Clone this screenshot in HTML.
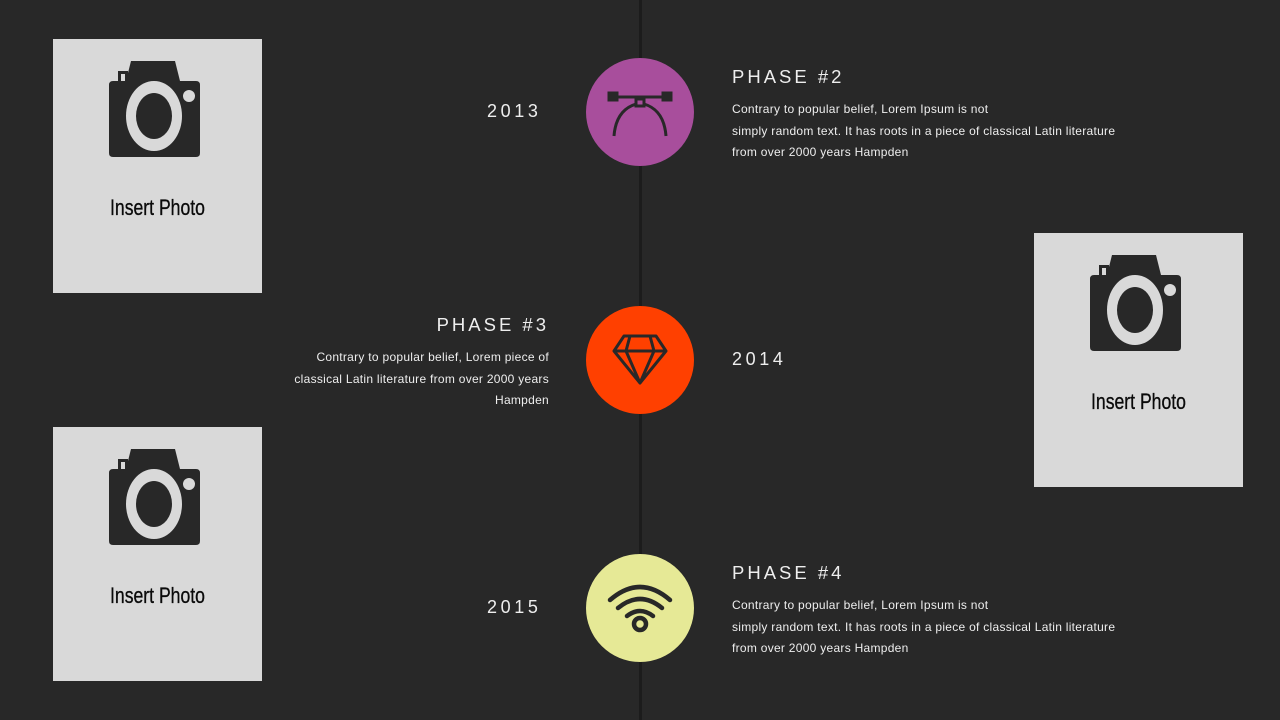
<!DOCTYPE html>
<html><head><meta charset="utf-8"><style>
body{margin:0;width:1280px;height:720px;background:#282828;position:relative;overflow:hidden;font-family:"Liberation Sans",sans-serif;color:#eee}
.line{position:absolute;left:639px;top:0;width:3px;height:720px;background:#1c1c1c}
.ph{position:absolute;width:209px;height:254px;background:#d9d9d9}
.ph svg{position:absolute;left:0;top:0}
.ph span{position:absolute;left:0;width:209px;top:156px;text-align:center;font-size:22px;color:#0a0a0a;transform:scaleX(.8);font-family:"Liberation Sans Narrow","Liberation Sans",sans-serif;-webkit-text-stroke:.3px #0a0a0a}
.c{position:absolute;width:108px;height:108px;border-radius:50%}
.c svg{position:absolute;left:0;top:0}
.t{position:absolute;font-size:18.5px;letter-spacing:3px;color:#eee}
.y{position:absolute;font-size:18px;letter-spacing:3.6px;color:#eee}
.p{position:absolute;font-size:12px;letter-spacing:.28px;line-height:21.5px;color:#eee}
</style></head><body>
<svg width="0" height="0" style="position:absolute"><defs><g id="cam">
<path d="M73 42 L78 22 L122 22 L127 42 L143 42 Q147 42 147 46 L147 114 Q147 118 143 118 L60 118 Q56 118 56 114 L56 46 Q56 42 60 42 Z" fill="#282828"/>
<rect x="65" y="32" width="10" height="11" fill="#282828"/><rect x="68" y="35" width="4" height="7" fill="#d9d9d9"/>
<ellipse cx="101" cy="77" rx="28" ry="35" fill="#d9d9d9"/><ellipse cx="101" cy="77" rx="18" ry="23" fill="#282828"/>
<circle cx="136" cy="57" r="6" fill="#d9d9d9"/></g></defs></svg>
<div class="line"></div>
<div class="ph" style="left:53px;top:39px"><svg width="209" height="254"><use href="#cam"/></svg><span>Insert Photo</span></div>
<div class="ph" style="left:53px;top:427px"><svg width="209" height="254"><use href="#cam"/></svg><span>Insert Photo</span></div>
<div class="ph" style="left:1034px;top:233px"><svg width="209" height="254"><use href="#cam"/></svg><span>Insert Photo</span></div>

<div class="c" style="left:586px;top:58px;background:#a84e9c"><svg width="108" height="108" fill="none" stroke="#282828" stroke-width="3">
<line x1="28" y1="39" x2="80" y2="39"/><rect x="23" y="35" width="8" height="7" fill="#282828"/><rect x="77" y="35" width="8" height="7" fill="#282828"/><rect x="50" y="41" width="8" height="7"/>
<path d="M50 46 Q30 52 28 78 M58 46 Q78 52 80 78"/></svg></div>
<div class="c" style="left:586px;top:306px;background:#ff4000"><svg width="108" height="108" fill="none" stroke="#282828" stroke-width="3" stroke-linejoin="round">
<path d="M38 30 L70 30 L80 45 L54 77 L28 45 Z M28 45 L80 45 M44 30 L40 45 L54 77 L68 45 L64 30"/></svg></div>
<div class="c" style="left:586px;top:554px;background:#e6e996"><svg width="108" height="108" fill="none" stroke="#282828" stroke-width="4.5" stroke-linecap="round">
<path d="M24 46 Q54 20 84 46 M32 54 Q54 36 76 54 M41 62 Q54 52 67 62"/><circle cx="54" cy="70" r="6"/></svg></div>

<div class="y" style="left:487px;top:101px">2013</div>
<div class="t" style="left:732px;top:66px">PHASE #2</div>
<div class="p" style="left:732px;top:99px">Contrary to popular belief, Lorem Ipsum is not<br>simply random text. It has roots in a piece of classical Latin literature<br>from over 2000 years Hampden</div>

<div class="t" style="right:731px;top:314px">PHASE #3</div>
<div class="p" style="right:731px;top:347px;text-align:right">Contrary to popular belief, Lorem piece of<br>classical Latin literature from over 2000 years<br>Hampden</div>
<div class="y" style="left:732px;top:349px">2014</div>

<div class="y" style="left:487px;top:597px">2015</div>
<div class="t" style="left:732px;top:562px">PHASE #4</div>
<div class="p" style="left:732px;top:595px">Contrary to popular belief, Lorem Ipsum is not<br>simply random text. It has roots in a piece of classical Latin literature<br>from over 2000 years Hampden</div>
</body></html>
